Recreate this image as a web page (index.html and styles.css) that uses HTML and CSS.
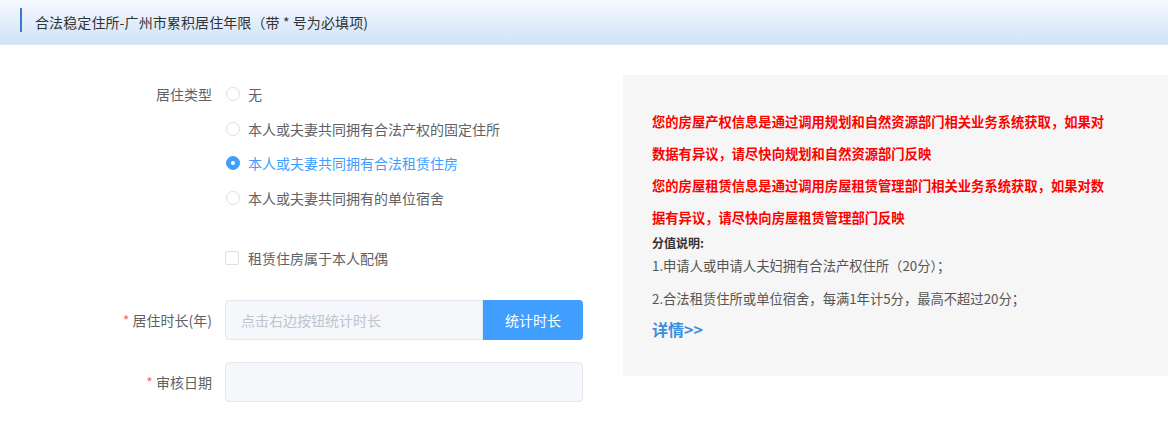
FILE: index.html
```html
<!DOCTYPE html>
<html lang="zh-CN">
<head>
<meta charset="utf-8">
<title>合法稳定住所</title>
<link rel="stylesheet" href="styles.css">
</head>
<body>
<div class="header">
  <span class="header-bar"></span>
  <span class="header-title">合法稳定住所-广州市累积居住年限（带 * 号为必填项)</span>
</div>
<div class="content">
  <div class="form">
    <div class="row row-radio">
      <div class="label">居住类型</div>
      <div class="options">
        <div class="option"><span class="radio"></span><span>无</span></div>
        <div class="option"><span class="radio"></span><span>本人或夫妻共同拥有合法产权的固定住所</span></div>
        <div class="option option-on"><span class="radio radio-on"></span><span>本人或夫妻共同拥有合法租赁住房</span></div>
        <div class="option"><span class="radio"></span><span>本人或夫妻共同拥有的单位宿舍</span></div>
      </div>
    </div>
    <div class="row row-check">
      <div class="label"></div>
      <div class="option"><span class="checkbox"></span><span>租赁住房属于本人配偶</span></div>
    </div>
    <div class="row row-input first">
      <div class="label"><span class="star">*</span> 居住时长(年)</div>
      <div class="input-group">
        <div class="input placeholder">点击右边按钮统计时长</div>
        <div class="btn">统计时长</div>
      </div>
    </div>
    <div class="row row-input second">
      <div class="label"><span class="star">*</span> 审核日期</div>
      <div class="input input-full"></div>
    </div>
  </div>
  <div class="panel">
    <p class="red">您的房屋产权信息是通过调用规划和自然资源部门相关业务系统获取，如果对数据有异议，请尽快向规划和自然资源部门反映</p>
    <p class="red">您的房屋租赁信息是通过调用房屋租赁管理部门相关业务系统获取，如果对数据有异议，请尽快向房屋租赁管理部门反映</p>
    <p class="sub">分值说明:</p>
    <p class="desc">1.申请人或申请人夫妇拥有合法产权住所（20分）；</p>
    <p class="desc desc2">2.合法租赁住所或单位宿舍，每满1年计5分，最高不超过20分；</p>
    <p class="more">详情&gt;&gt;</p>
  </div>
</div>
</body>
</html>
```
FILE: styles.css
```css
* { box-sizing: border-box; }
body {
  margin: 0;
  background: #fff;
  font-family: "Noto Sans CJK SC", "Liberation Sans", sans-serif;
  color: #606266;
}
.header {
  height: 45px;
  display: flex;
  align-items: center;
  background: linear-gradient(to bottom, #f5f9ff, #d0e3f8);
  border-bottom: 1px solid #dde8f4;
  padding-left: 20px;
}
.header-bar {
  width: 2px;
  height: 24px;
  background: #3a78cf;
  margin-right: 13px;
  margin-top: -4px;
}
.header-title {
  font-size: 14px;
  color: #333;
  letter-spacing: 0.1px;
}
.content {
  display: flex;
  padding-top: 30px;
}
.form {
  width: 583px;
  flex: none;
}
.row {
  display: flex;
}
.label {
  width: 212px;
  flex: none;
  text-align: right;
  font-size: 14px;
  color: #606266;
  margin-right: 13px;
}
.row-radio { padding-top: 2px; }
.row-radio .label { line-height: 34px; }
.option {
  display: flex;
  align-items: center;
  height: 34px;
  font-size: 14px;
  color: #606266;
}
.options .option { height: 34.5px; }
.option-on { color: #409eff; }
.radio {
  width: 14px;
  height: 14px;
  border: 1px solid #dcdfe6;
  border-radius: 50%;
  background: #fff;
  margin-left: 1px;
  margin-right: 8px;
  flex: none;
  display: flex;
  align-items: center;
  justify-content: center;
}
.radio-on {
  background: #409eff;
  border-color: #409eff;
}
.radio-on::after {
  content: "";
  width: 4px;
  height: 4px;
  border-radius: 50%;
  background: #fff;
}
.row-check { margin-top: 26px; }
.checkbox {
  width: 14px;
  height: 14px;
  border: 1px solid #dcdfe6;
  border-radius: 2px;
  background: #fff;
  margin-right: 9px;
  flex: none;
}
.row-input { align-items: center; height: 40px; }
.row-input.first { margin-top: 25px; }
.row-input.second { margin-top: 22px; }
.star { color: #f56c6c; }
.input-group {
  display: flex;
  flex: 1;
  height: 40px;
}
.input {
  flex: 1;
  height: 40px;
  background: #f5f7fa;
  border: 1px solid #e4e7ed;
  border-radius: 4px 0 0 4px;
  padding-left: 15px;
  font-size: 14px;
  line-height: 38px;
}
.placeholder { color: #c0c4cc; }
.input-full { border-radius: 4px; }
.btn {
  width: 100px;
  height: 40px;
  background: #409eff;
  color: #fff;
  font-size: 14px;
  line-height: 40px;
  text-align: center;
  border-radius: 0 4px 4px 0;
}
.panel {
  flex: 1;
  margin-left: 40px;
  height: 301px;
  background: #f6f6f6;
  padding: 31px 54px 0 29px;
}
.panel p { margin: 0; }
.red {
  color: #f00;
  font-weight: bold;
  font-size: 13.3px;
  line-height: 32px;
}
.sub {
  color: #333;
  font-weight: bold;
  font-size: 12px;
  line-height: 18px;
}
.desc {
  color: #555;
  font-size: 13.3px;
  line-height: 28px;
}
.desc2 { margin-top: 5px !important; }
.more {
  color: #3b8fe0;
  font-size: 16px;
  font-weight: bold;
  line-height: 32px;
}
```
